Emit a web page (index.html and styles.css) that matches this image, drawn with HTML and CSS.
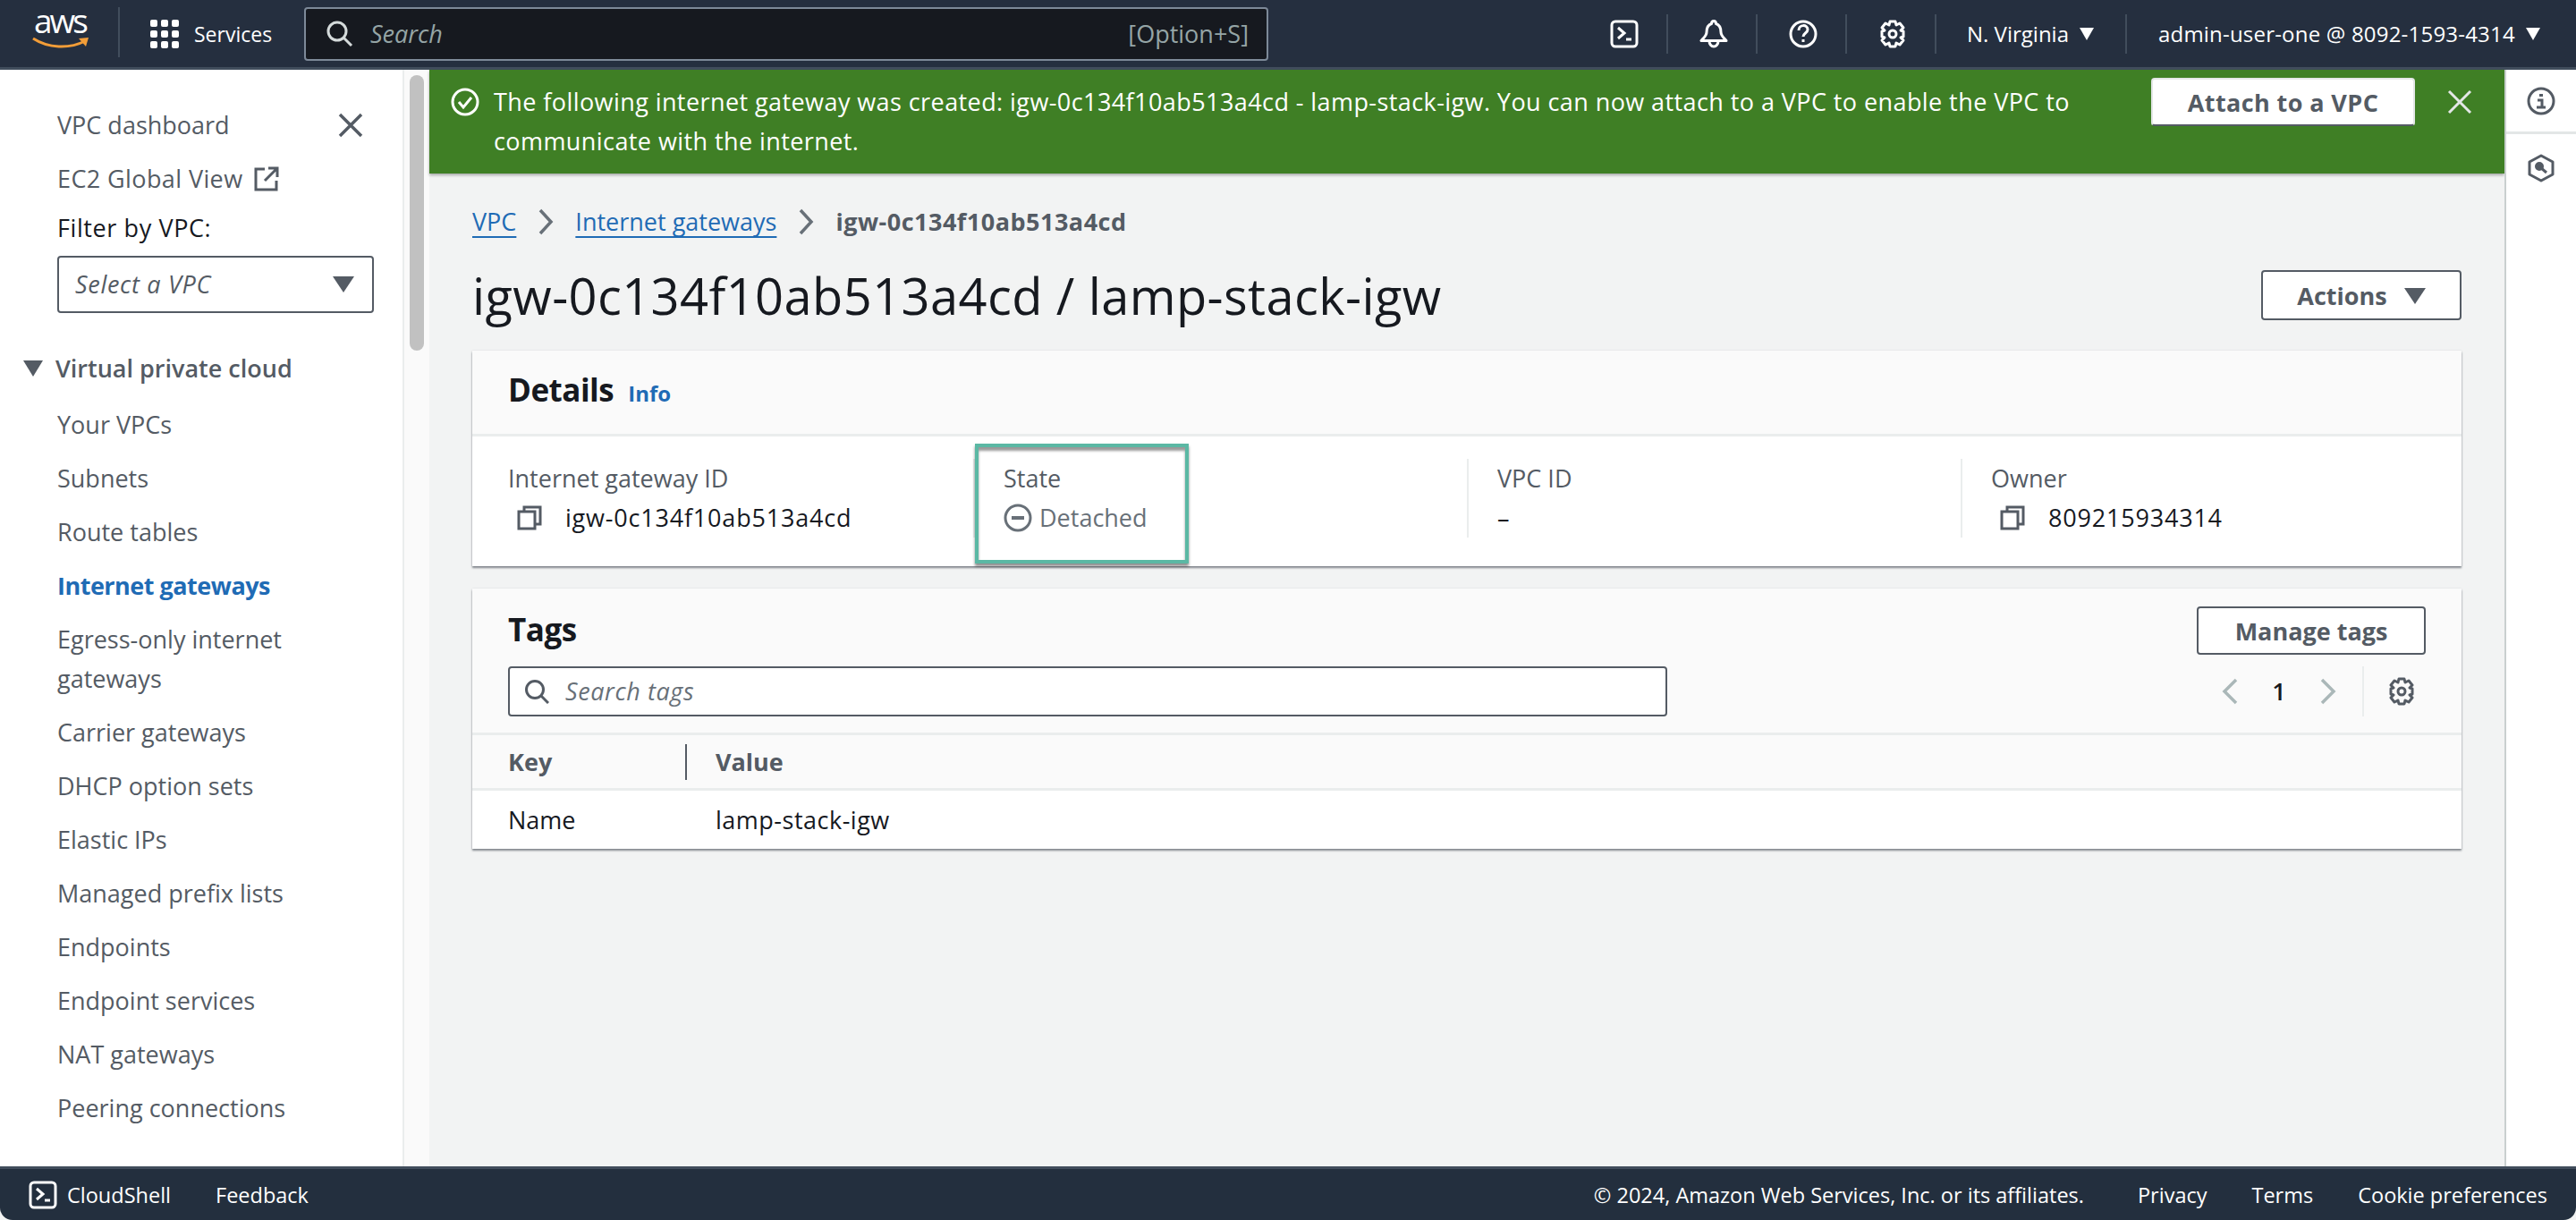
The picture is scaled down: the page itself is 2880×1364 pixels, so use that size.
FILE: index.html
```html
<!DOCTYPE html>
<html lang="en">
<head>
    <meta charset="UTF-8">
    <title>igw-0c134f10ab513a4cd / lamp-stack-igw</title>
    <link rel="stylesheet" href="styles.css">
</head>
<body>
    <!-- Top navigation -->
    <header class="topnav">
        <div class="logo">
            <span class="logo-text">aws</span>
            <svg class="logo-smile" viewBox="0 0 64 14"><path d="M1 2c17 11 40 12 58 3" fill="none" stroke="#f29d38" stroke-width="3"/><path d="M52 2l11-1-3 10z" fill="#f29d38"/></svg>
        </div>
        <div class="services">
            <svg class="ico-32" viewBox="0 0 32 32" fill="#fff"><rect x="0" y="0" width="8" height="8" rx="2"/><rect x="12" y="0" width="8" height="8" rx="2"/><rect x="24" y="0" width="8" height="8" rx="2"/><rect x="0" y="12" width="8" height="8" rx="2"/><rect x="12" y="12" width="8" height="8" rx="2"/><rect x="24" y="12" width="8" height="8" rx="2"/><rect x="0" y="24" width="8" height="8" rx="2"/><rect x="12" y="24" width="8" height="8" rx="2"/><rect x="24" y="24" width="8" height="8" rx="2"/></svg>
            <span>Services</span>
        </div>
        <div class="nav-search">
            <svg class="ico-32" viewBox="0 0 32 32" fill="none" stroke="#d5dbdb" stroke-width="3"><circle cx="13" cy="13" r="10"/><path d="M20 20l9 9"/></svg>
            <span class="nav-search-text">Search</span>
            <span class="nav-search-key">[Option+S]</span>
        </div>
        <div class="nav-right">
            <div class="nav-ico">
                <svg class="ico-32" viewBox="0 0 32 32" fill="none" stroke="#fff" stroke-width="3"><rect x="2" y="2" width="28" height="28" rx="4"/><path d="M9 9l7 6-7 6"/><path d="M18 22h6"/></svg>
            </div>
            <div class="nav-ico">
                <svg class="ico-32" viewBox="0 0 32 32" fill="none" stroke="#fff" stroke-width="3"><path d="M16 1.500c-1.500 0-2.500 1-2.500 3-4.500 1.500-5.500 5-5.500 9.500 0 4-4 7-6 9.500h28c-2-2.500-6-5.500-6-9.500 0-4.500-1-8-5.500-9.500 0-2-1-3-2.500-3z" stroke-linejoin="round"/><path d="M11 24a5 6 0 0 0 10 0"/></svg>
            </div>
            <div class="nav-ico">
                <svg class="ico-32" viewBox="0 0 32 32" fill="none" stroke="#fff" stroke-width="3"><circle cx="16" cy="16" r="14"/><path d="M11 12c0-7 10-7 10-1 0 4-5 4-5 8"/><path d="M16 22v3"/></svg>
            </div>
            <div class="nav-ico">
                <svg class="ico-32" viewBox="0 0 32 32" fill="none" stroke="#fff" stroke-width="3"><path d="M13 2h6l1 4 4-2 4 5-3 3 3 1v6l-3 1 3 3-4 5-4-2-1 4h-6l-1-4-4 2-4-5 3-3-3-1v-6l3-1-3-3 4-5 4 2z" stroke-linejoin="round"/><circle cx="16" cy="16" r="4"/></svg>
            </div>
            <div class="nav-menu region">N. Virginia <i class="caret caret-white"></i></div>
            <div class="nav-menu user">admin-user-one @ 8092-1593-4314 <i class="caret caret-white"></i></div>
        </div>
    </header>

    <div class="middle">
        <!-- Side navigation -->
        <nav class="sidenav">
            <div class="sidenav-scroll">
                <div class="side-top">
                    <span>VPC dashboard</span>
                    <svg class="side-close" viewBox="0 0 28 28" fill="none" stroke="#545b64" stroke-width="3.500"><path d="M2 2l24 24M26 2L2 26"/></svg>
                </div>
                <a class="side-link ec2">EC2 Global View
                    <svg class="ico-28" viewBox="0 0 28 28" fill="none" stroke="#545b64" stroke-width="3"><path d="M12 3H2v23h23V16"/><path d="M12 16L25 3M16 2h10v10"/></svg>
                </a>
                <div class="filter-label">Filter by VPC:</div>
                <div class="filter-select">
                    <span>Select a VPC</span>
                    <i class="caret caret-grey"></i>
                </div>
                <div class="side-group"><i class="caret caret-grey"></i>Virtual private cloud</div>
                <ul class="side-list">
                    <li>Your VPCs</li>
                    <li>Subnets</li>
                    <li>Route tables</li>
                    <li class="active">Internet gateways</li>
                    <li>Egress-only internet gateways</li>
                    <li>Carrier gateways</li>
                    <li>DHCP option sets</li>
                    <li>Elastic IPs</li>
                    <li>Managed prefix lists</li>
                    <li>Endpoints</li>
                    <li>Endpoint services</li>
                    <li>NAT gateways</li>
                    <li>Peering connections</li>
                </ul>
            </div>
            <div class="scrolltrack"><div class="scrollthumb"></div></div>
        </nav>

        <main class="content">
            <!-- Success banner -->
            <div class="flash">
                <svg class="flash-ico" viewBox="0 0 32 32" fill="none" stroke="#fff" stroke-width="3"><circle cx="16" cy="16" r="14"/><path d="M9 16l5 6 9-11"/></svg>
                <div class="flash-text">The following internet gateway was created: igw-0c134f10ab513a4cd - lamp-stack-igw. You can now attach to a VPC to enable the VPC to communicate with the internet.</div>
                <button class="btn btn-attach">Attach to a VPC</button>
                <svg class="flash-close" viewBox="0 0 28 28" fill="none" stroke="#e4e7e7" stroke-width="3"><path d="M2 2l24 24M26 2L2 26"/></svg>
            </div>

            <div class="page">
                <div class="breadcrumbs">
                    <a>VPC</a>
                    <svg class="crumb-sep" viewBox="0 0 18 30" fill="none" stroke="#687078" stroke-width="3.500"><path d="M3 2l12 13L3 28"/></svg>
                    <a>Internet gateways</a>
                    <svg class="crumb-sep" viewBox="0 0 18 30" fill="none" stroke="#687078" stroke-width="3.500"><path d="M3 2l12 13L3 28"/></svg>
                    <span>igw-0c134f10ab513a4cd</span>
                </div>

                <div class="page-head">
                    <h1>igw-0c134f10ab513a4cd / lamp-stack-igw</h1>
                    <button class="btn btn-actions">Actions <i class="caret caret-grey"></i></button>
                </div>

                <section class="card">
                    <div class="card-head">
                        <h2>Details</h2>
                        <a class="info">Info</a>
                    </div>
                    <div class="details">
                        <div class="col">
                            <div class="col-label">Internet gateway ID</div>
                            <div class="col-value">
                                <svg class="copy" viewBox="0 0 28 28" fill="none" stroke="#545b64" stroke-width="3"><path d="M8 7V2h18v19h-6"/><rect x="2" y="7" width="18" height="19"/></svg>
                                <span class="res-id">igw-0c134f10ab513a4cd</span>
                            </div>
                        </div>
                        <div class="col col-state">
                            <div class="col-label">State</div>
                            <div class="col-value state">
                                <svg class="ico-32" viewBox="0 0 32 32" fill="none" stroke="#687078" stroke-width="3"><circle cx="16" cy="16" r="14"/><path d="M9 16h14" stroke-width="4"/></svg>
                                <span>Detached</span>
                            </div>
                            <div class="highlight"></div>
                        </div>
                        <div class="col">
                            <div class="col-label">VPC ID</div>
                            <div class="col-value">–</div>
                        </div>
                        <div class="col">
                            <div class="col-label">Owner</div>
                            <div class="col-value">
                                <svg class="copy" viewBox="0 0 28 28" fill="none" stroke="#545b64" stroke-width="3"><path d="M8 7V2h18v19h-6"/><rect x="2" y="7" width="18" height="19"/></svg>
                                <span class="res-id">809215934314</span>
                            </div>
                        </div>
                    </div>
                </section>

                <section class="card">
                    <div class="tags-head">
                        <div class="tags-left">
                            <h2>Tags</h2>
                            <div class="tag-search">
                                <svg class="ico-28" viewBox="0 0 28 28" fill="none" stroke="#545b64" stroke-width="3"><circle cx="12" cy="12" r="9.500"/><path d="M19 19l8 8"/></svg>
                                <span>Search tags</span>
                            </div>
                        </div>
                        <div class="tags-right">
                            <button class="btn btn-manage">Manage tags</button>
                            <div class="pager">
                                <svg class="pager-arrow" viewBox="0 0 20 30" fill="none" stroke="#aab7b8" stroke-width="3.500"><path d="M17 2L4 15l13 13"/></svg>
                                <span class="pager-num">1</span>
                                <svg class="pager-arrow" viewBox="0 0 20 30" fill="none" stroke="#aab7b8" stroke-width="3.500"><path d="M3 2l13 13L3 28"/></svg>
                                <div class="pager-gear">
                                    <svg class="ico-32" viewBox="0 0 32 32" fill="none" stroke="#545b64" stroke-width="3"><path d="M13 2h6l1 4 4-2 4 5-3 3 3 1v6l-3 1 3 3-4 5-4-2-1 4h-6l-1-4-4 2-4-5 3-3-3-1v-6l3-1-3-3 4-5 4 2z" stroke-linejoin="round"/><circle cx="16" cy="16" r="4"/></svg>
                                </div>
                            </div>
                        </div>
                    </div>
                    <div class="table-head">
                        <div class="cell-key">Key</div>
                        <div class="cell-value">Value</div>
                    </div>
                    <div class="table-row">
                        <div class="cell-key">Name</div>
                        <div class="cell-value res-name">lamp-stack-igw</div>
                    </div>
                </section>
            </div>
        </main>

        <!-- Right rail -->
        <aside class="rail">
            <div class="rail-item">
                <svg class="ico-32" viewBox="0 0 32 32" fill="none" stroke="#545b64" stroke-width="3"><circle cx="16" cy="16" r="14"/><path d="M16 8v3" stroke-width="4"/><path d="M12 15h5v8M11 23h10" stroke-width="3"/></svg>
            </div>
            <div class="rail-item">
                <svg class="ico-32" viewBox="0 0 32 32" fill="none" stroke="#545b64" stroke-width="3"><path d="M16 2l13 7v14l-13 7-13-7V9z" stroke-linejoin="round"/><circle cx="14" cy="14" r="3.500" fill="#545b64"/><path d="M15 15l7 6"/></svg>
            </div>
        </aside>
    </div>

    <footer class="footer">
        <svg class="ico-32" viewBox="0 0 32 32" fill="none" stroke="#fff" stroke-width="3"><rect x="2" y="2" width="28" height="28" rx="4"/><path d="M9 9l7 6-7 6"/><path d="M18 22h6"/></svg>
        <span class="foot-shell">CloudShell</span>
        <span class="foot-feedback">Feedback</span>
        <div class="foot-right">
            <span>© 2024, Amazon Web Services, Inc. or its affiliates.</span>
            <span class="foot-gap">Privacy</span>
            <span>Terms</span>
            <span>Cookie preferences</span>
        </div>
    </footer>
</body>
</html>
```

FILE: styles.css
```css
* {
    box-sizing: border-box;
}
html, body {
    margin: 0;
    height: 100%;
}
body {
    display: flex;
    flex-direction: column;
    height: 100vh;
    overflow: hidden;
    font-family: "Open Sans", "Noto Sans", sans-serif;
    font-size: 27px;
    line-height: 44px;
    color: #16191f;
    background: #f2f3f3;
}
h1, h2 {
    margin: 0;
}
a {
    color: #1f6bb5;
}
svg {
    display: block;
    flex: none;
}
.ico-32 {
    width: 32px;
    height: 32px;
}
.ico-28 {
    width: 28px;
    height: 28px;
}
.res-id {
    letter-spacing: 0.8px;
}
.res-name {
    letter-spacing: 0.5px;
}
.caret {
    display: inline-block;
    width: 0;
    height: 0;
    border-left: 12px solid transparent;
    border-right: 12px solid transparent;
    border-top: 18px solid #545b64;
}
.caret-white {
    border-left-width: 8px;
    border-right-width: 8px;
    border-top: 14px solid #fff;
    margin-left: 6px;
    vertical-align: 2px;
}
.caret-grey {
    border-top-color: #545b64;
}

/* top nav */
.topnav {
    flex: none;
    display: flex;
    align-items: center;
    height: 78px;
    background: #252f3f;
    border-bottom: 3px solid #414d5c;
    color: #fff;
    padding-left: 36px;
}
.logo {
    width: 98px;
    height: 56px;
    border-right: 2px solid #414d5c;
    margin-top: -4px;
}
.logo-text {
    display: block;
    height: 30px;
    padding-left: 2px;
    font-size: 37px;
    line-height: 30px;
    letter-spacing: -3px;
}
.logo-smile {
    width: 64px;
    height: 14px;
    margin-top: 3px;
}
.services {
    display: flex;
    align-items: center;
    gap: 17px;
    margin-left: 34px;
    width: 172px;
    font-size: 23px;
}
.nav-search {
    display: flex;
    align-items: center;
    width: 1078px;
    height: 60px;
    padding: 0 20px 0 22px;
    background: #16191f;
    border: 2px solid #7d8998;
    border-radius: 4px;
}
.nav-search-text {
    margin-left: 18px;
    font-style: italic;
    color: #95a5a6;
}
.nav-search-key {
    margin-left: auto;
    color: #95a5a6;
}
.nav-right {
    display: flex;
    align-items: center;
    margin-left: auto;
    font-size: 24px;
}
.nav-ico {
    display: flex;
    justify-content: center;
    align-items: center;
    width: 100px;
    height: 44px;
    padding-left: 4px;
    border-right: 2px solid #414d5c;
}
.nav-menu {
    display: flex;
    align-items: center;
    height: 44px;
    white-space: pre;
}
.region {
    width: 213px;
    padding-left: 34px;
    border-right: 2px solid #414d5c;
}
.user {
    width: 502px;
    padding-left: 35px;
    letter-spacing: 0.2px;
}

.middle {
    flex: 1;
    display: flex;
    min-height: 0;
}

/* side nav */
.sidenav {
    flex: none;
    display: flex;
    width: 480px;
    background: #fff;
    color: #545b64;
}
.sidenav-scroll {
    width: 452px;
    padding: 40px 0 0 64px;
    border-right: 2px solid #eaeded;
    overflow: hidden;
}
.side-top {
    display: flex;
    align-items: center;
    justify-content: space-between;
    padding-right: 44px;
}
.side-close {
    width: 28px;
    height: 28px;
}
.side-link {
    display: flex;
    align-items: center;
    gap: 12px;
    margin-top: 16px;
    color: #545b64;
    letter-spacing: 0.4px;
}
.filter-label {
    margin-top: 11px;
    color: #16191f;
    letter-spacing: 0.6px;
}
.filter-select {
    display: flex;
    align-items: center;
    justify-content: space-between;
    width: 354px;
    height: 64px;
    margin-top: 9px;
    padding: 0 20px 0 18px;
    background: #fff;
    border: 2px solid #545b64;
    border-radius: 4px;
    font-style: italic;
    letter-spacing: 0.7px;
}
.side-group {
    display: flex;
    align-items: center;
    gap: 14px;
    margin: 40px 0 0 -38px;
    font-weight: 600;
}
.side-group .caret {
    flex: none;
    border-left-width: 11px;
    border-right-width: 11px;
    border-top-width: 18px;
}
.side-list {
    list-style: none;
    margin: 19px 0 0;
    padding: 0 30px 0 0;
}
.side-list li {
    margin-bottom: 16px;
}
.side-list .active {
    color: #1f6bb5;
    font-weight: 700;
    letter-spacing: -0.5px;
}
.scrolltrack {
    width: 28px;
    padding: 6px 0 0 6px;
    background: #fafafa;
}
.scrollthumb {
    width: 16px;
    height: 308px;
    background: #c1c1c1;
    border-radius: 8px;
}

/* content */
.content {
    flex: 1;
    min-width: 0;
}
.flash {
    display: flex;
    align-items: flex-start;
    height: 116px;
    padding: 14px 36px 0 24px;
    background: #3f7f25;
    color: #fff;
    box-shadow: 0 2px 3px rgba(0, 0, 0, 0.3);
}
.flash-ico {
    width: 32px;
    height: 32px;
    margin-top: 6px;
}
.flash-text {
    width: 1790px;
    margin-left: 16px;
    letter-spacing: 0.42px;
}
.btn {
    font-family: inherit;
    font-size: 27px;
    font-weight: 700;
    color: #545b64;
    background: #fff;
    border: 2px solid #545b64;
    border-radius: 4px;
    cursor: pointer;
}
.btn-attach {
    flex: none;
    width: 295px;
    height: 54px;
    margin: -5px 0 0 63px;
    border-color: #e4e7e7;
    border-bottom-color: #545b64;
    letter-spacing: 0.4px;
}
.flash-close {
    width: 28px;
    height: 28px;
    margin: 8px 0 0 36px;
}
.page {
    padding: 32px 48px 0;
}
.breadcrumbs {
    display: flex;
    align-items: center;
    height: 44px;
}
.breadcrumbs a {
    text-decoration: underline;
    text-underline-offset: 6px;
}
.breadcrumbs span {
    color: #545b64;
    font-weight: 700;
    letter-spacing: 0.5px;
}
.crumb-sep {
    width: 18px;
    height: 30px;
    margin: 0 24px;
}
.page-head {
    display: flex;
    align-items: center;
    justify-content: space-between;
    height: 82px;
    margin: 19px 0 21px;
}
h1 {
    font-size: 56px;
    font-weight: 400;
    line-height: 72px;
    letter-spacing: 0.4px;
}
.btn-actions {
    width: 224px;
    height: 56px;
}
.btn-actions .caret {
    margin-left: 12px;
    vertical-align: 1px;
}

/* cards */
.card {
    margin-bottom: 25px;
    background: #fff;
    box-shadow: 0 2px 2px rgba(84, 91, 100, 0.7), 0 0 2px rgba(0, 28, 36, 0.1);
}
.card-head {
    display: flex;
    align-items: baseline;
    gap: 16px;
    height: 96px;
    padding: 21px 40px 0;
    background: #fafafa;
    border-bottom: 3px solid #eaeded;
}
h2 {
    font-size: 35px;
    font-weight: 700;
    line-height: 46px;
    letter-spacing: -0.5px;
}
.info {
    font-size: 24px;
    font-weight: 700;
}
.details {
    display: grid;
    grid-template-columns: repeat(4, 1fr);
    height: 145px;
    padding: 25px 8px 0;
}
.col {
    position: relative;
    height: 88px;
    padding-left: 32px;
    border-left: 2px solid #eaeded;
    color: #16191f;
}
.col:first-child {
    border-left: 0;
}
.col-label {
    color: #545b64;
}
.col-value {
    display: flex;
    align-items: center;
    height: 44px;
}
.col-value .copy {
    width: 28px;
    height: 28px;
    margin: 0 26px 0 10px;
}
.state {
    gap: 8px;
    color: #687078;
}
.highlight {
    position: absolute;
    left: 0;
    top: -17px;
    width: 239px;
    height: 134px;
    border: 4px solid #5bb8a4;
    box-shadow: 0 3px 3px rgba(0, 0, 0, 0.45), inset 0 4px 3px rgba(0, 0, 0, 0.4);
}

/* tags */
.tags-head {
    display: flex;
    justify-content: space-between;
    height: 164px;
    padding: 20px 40px 0;
    background: #fafafa;
    border-bottom: 3px solid #eaeded;
}
.tags-left {
    display: flex;
    flex-direction: column;
}
.tags-left h2 {
    height: 67px;
    line-height: 52px;
}
.tag-search {
    display: flex;
    align-items: center;
    gap: 18px;
    width: 1296px;
    height: 56px;
    padding-left: 16px;
    background: #fff;
    border: 2px solid #545b64;
    border-radius: 4px;
    color: #687078;
    font-style: italic;
    letter-spacing: 0.6px;
}
.tags-right {
    display: flex;
    flex-direction: column;
    align-items: flex-end;
}
.btn-manage {
    width: 256px;
    height: 54px;
}
.pager {
    display: flex;
    align-items: center;
    height: 56px;
    margin-top: 13px;
    margin-right: 11px;
}
.pager-arrow {
    width: 20px;
    height: 30px;
}
.pager-num {
    width: 90px;
    text-align: center;
    font-weight: 600;
}
.pager-gear {
    display: flex;
    align-items: center;
    height: 56px;
    margin-left: 28px;
    padding-left: 26px;
    border-left: 2px solid #eaeded;
}
.table-head,
.table-row {
    display: flex;
    align-items: center;
    padding-left: 40px;
}
.table-head {
    height: 62px;
    background: #fafafa;
    border-bottom: 3px solid #eaeded;
    color: #545b64;
    font-weight: 700;
}
.table-row {
    height: 65px;
}
.cell-key {
    width: 232px;
}
.table-head .cell-key {
    height: 40px;
    line-height: 40px;
    border-right: 2px solid #545b64;
    width: 200px;
    margin-right: 32px;
}

/* right rail */
.rail {
    flex: none;
    width: 80px;
    background: #fff;
    border-left: 2px solid #c9cfcf;
}
.rail-item {
    display: flex;
    justify-content: center;
    align-items: center;
    height: 72px;
}
.rail-item:first-child {
    border-bottom: 3px solid #e3e6e6;
}
.rail-item:last-child {
    margin-top: 2px;
}

/* footer */
.footer {
    flex: none;
    display: flex;
    align-items: center;
    height: 60px;
    padding: 0 32px;
    background: #232f3e;
    border-top: 3px solid #414d5c;
    border-radius: 0 0 14px 14px;
    color: #fff;
    font-size: 23.5px;
}
.foot-shell {
    margin-left: 11px;
}
.foot-feedback {
    margin-left: 50px;
}
.foot-right {
    display: flex;
    gap: 50px;
    margin-left: auto;
}
.foot-gap {
    margin-left: 10px;
}
```
